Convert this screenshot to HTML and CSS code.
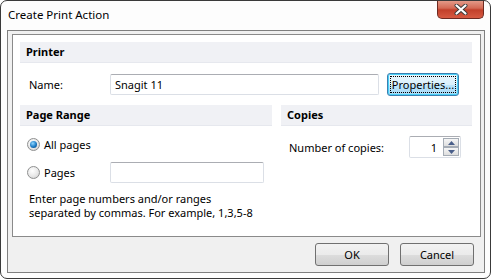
FILE: index.html
```html
<!DOCTYPE html>
<html lang="en">
<head>
    <meta charset="UTF-8">
    <title>Create Print Action</title>
    <link rel="stylesheet" href="styles.css">
</head>
<body>
    <div class="window">
        <div class="titlebar">
            <span class="title">Create Print Action</span>
            <button type="button" class="close" aria-label="Close">
                <svg width="14" height="11" viewBox="0 0 14 11">
                    <path d="M2.5 1.5 L11.5 9.5 M11.5 1.5 L2.5 9.5" stroke="#3a3a3a" stroke-width="4" stroke-linecap="round"/>
                    <path d="M2.5 1.5 L11.5 9.5 M11.5 1.5 L2.5 9.5" stroke="#ffffff" stroke-width="2.2" stroke-linecap="round"/>
                </svg>
            </button>
        </div>

        <div class="client">
            <div class="panel">
                <div class="section-head">Printer</div>
                <div class="name-row">
                    <label class="label" for="printerName">Name:</label>
                    <input type="text" id="printerName" class="field name-field" value="Snagit 11">
                    <button type="button" class="btn btn-default"><span class="focus-ring">Properties...</span></button>
                </div>

                <div class="columns">
                    <div class="col-range">
                        <div class="section-head">Page Range</div>
                        <div class="radio-row">
                            <span class="radio checked"></span>
                            <span class="radio-text">All pages</span>
                        </div>
                        <div class="radio-row">
                            <span class="radio"></span>
                            <span class="radio-text pages-text">Pages</span>
                            <input type="text" class="field pages-field">
                        </div>
                        <p class="hint">Enter page numbers and/or ranges<br>separated by commas. For example, 1,3,5-8</p>
                    </div>

                    <div class="col-copies">
                        <div class="section-head">Copies</div>
                        <div class="copies-row">
                            <span class="copies-label">Number of copies:</span>
                            <div class="spin">
                                <span class="spin-value">1</span>
                                <div class="spin-buttons">
                                    <span class="spin-btn"><svg width="7" height="4" viewBox="0 0 7 4"><path d="M0 4 L3.5 0 L7 4 Z" fill="#4a5f8a"/></svg></span>
                                    <span class="spin-btn"><svg width="7" height="4" viewBox="0 0 7 4"><path d="M0 0 L3.5 4 L7 0 Z" fill="#4a5f8a"/></svg></span>
                                </div>
                            </div>
                        </div>
                    </div>
                </div>
            </div>

            <div class="actions">
                <button type="button" class="btn">OK</button>
                <button type="button" class="btn">Cancel</button>
            </div>
        </div>
    </div>
</body>
</html>
```

FILE: styles.css
```css
* {
    box-sizing: border-box;
}

body {
    margin: 0;
    font-family: "Noto Sans", "Open Sans", sans-serif;
    font-size: 11px;
    color: #000;
    background: #fff;
}

.window {
    width: 491px;
    height: 279px;
    border: 1px solid #3a3a3a;
    border-radius: 7px;
    background: #fdfdfd;
    display: flex;
    flex-direction: column;
    overflow: hidden;
}

.titlebar {
    height: 29px;
    display: flex;
    align-items: flex-start;
    justify-content: space-between;
    padding-left: 7px;
}

.title {
    font-size: 11.5px;
    line-height: 28px;
}

.close {
    width: 47px;
    height: 19px;
    margin-right: 6px;
    margin-top: -1px;
    padding: 0;
    border: 1px solid #6d2a22;
    border-top: none;
    border-radius: 0 0 5px 5px;
    background: linear-gradient(#e6a08f 0%, #d46a55 45%, #c2402b 55%, #d65a42 100%);
    display: flex;
    align-items: center;
    justify-content: center;
}

.client {
    flex: 1;
    margin: 0 5px 5px 6px;
    border: 1px solid #7f7f7f;
    background: #f0f0f0;
    display: flex;
    flex-direction: column;
}

.panel {
    height: 203px;
    margin: 3px 3px 0 4px;
    border: 1px solid #8a8a8a;
    background: #fff;
    padding: 7px 8px 0 7px;
}

.section-head {
    height: 21px;
    background: #f0f1f5;
    border-bottom: 1px solid #e6e8ee;
    font-weight: bold;
    line-height: 20px;
    padding-left: 6px;
}

.name-row {
    margin-top: 10px;
    height: 23px;
    display: flex;
    align-items: center;
    padding-left: 9px;
}

.label {
    width: 81px;
}

.field {
    height: 21px;
    border: 1px solid #dbdfe6;
    border-top-color: #abadb3;
    border-radius: 2px;
    font: inherit;
    padding: 0 4px;
    background: #fff;
    outline: none;
}

.name-field {
    width: 269px;
    margin-right: 8px;
}

.btn {
    width: 74px;
    height: 23px;
    border: 1px solid #707070;
    border-radius: 3px;
    background: linear-gradient(#f2f2f2 0%, #ebebeb 50%, #dddddd 51%, #cfcfcf 100%);
    font: inherit;
    padding: 0;
    color: #000;
}

.btn-default {
    width: 72px;
    border-color: #3c7fb1;
    background: linear-gradient(#eaf6fd 0%, #d9f0fc 50%, #bee6fd 51%, #a7d9f5 100%);
    box-shadow: inset 0 0 0 1px #48d0f6;
    padding: 2px;
}

.focus-ring {
    display: block;
    height: 100%;
    border: 1px dotted #000;
    line-height: 16px;
}

.columns {
    margin-top: 9px;
    display: flex;
    gap: 9px;
}

.col-range {
    width: 252px;
}

.col-copies {
    flex: 1;
}

.radio-row {
    height: 21px;
    margin-top: 7px;
    display: flex;
    align-items: center;
    padding-left: 7px;
}

.section-head + .radio-row {
    margin-top: 8px;
}

.radio {
    width: 13px;
    height: 13px;
    border-radius: 50%;
    border: 1px solid #8e8f8f;
    background: radial-gradient(circle at 40% 35%, #ffffff 0%, #e8e8e8 55%, #c9c9c9 100%);
    display: flex;
    align-items: center;
    justify-content: center;
}

.radio.checked::after {
    content: "";
    width: 7px;
    height: 7px;
    border-radius: 50%;
    background: radial-gradient(circle at 40% 35%, #8fd6ff 0%, #1b7ac4 55%, #0b3d6e 100%);
}

.radio-text {
    margin-left: 4px;
}

.pages-text {
    width: 66px;
}

.pages-field {
    width: 154px;
}

.hint {
    margin: 9px 0 0;
    padding-left: 9px;
    line-height: 14px;
}

.copies-row {
    margin-top: 10px;
    height: 22px;
    display: flex;
    align-items: center;
    padding-left: 8px;
}

.copies-label {
    width: 120px;
}

.spin {
    width: 52px;
    height: 22px;
    border: 1px solid #dbdfe6;
    border-top-color: #abadb3;
    border-radius: 2px;
    background: #fff;
    display: flex;
    align-items: center;
    justify-content: flex-end;
    padding-right: 1px;
}

.spin-value {
    margin-right: 6px;
}

.spin-buttons {
    width: 16px;
    height: 18px;
    display: flex;
    flex-direction: column;
}

.spin-btn {
    flex: 1;
    border: 1px solid #a5acb5;
    background: linear-gradient(#f6f6f6, #dedede);
    display: flex;
    align-items: center;
    justify-content: center;
}

.actions {
    margin-top: 6px;
    display: flex;
    justify-content: flex-end;
    gap: 11px;
    padding-right: 10px;
}
```
